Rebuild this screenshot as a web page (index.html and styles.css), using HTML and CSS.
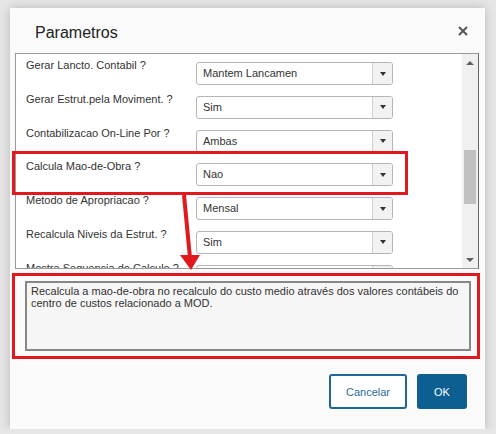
FILE: index.html
```html
<!DOCTYPE html>
<html lang="pt">

<head>
    <meta charset="UTF-8">
    <title>Parametros</title>
    <link rel="stylesheet" href="styles.css">
</head>

<body>
    <div class="dialog">
        <div class="dialog-header">
            <h2 class="dialog-title">Parametros</h2>
            <span class="close">
                <svg width="10" height="10" viewBox="0 0 10 10">
                    <path d="M1 1 L9 9 M9 1 L1 9" stroke="#555" stroke-width="2" />
                </svg>
            </span>
        </div>

        <div class="dialog-body">
            <div class="param-list">
                <div class="param-rows">
                    <div class="param-row">
                        <label class="param-label">Gerar Lancto. Contabil ?</label>
                        <div class="combo"><span class="combo-value">Mantem Lancamen</span><span class="combo-btn"></span></div>
                    </div>
                    <div class="param-row">
                        <label class="param-label">Gerar Estrut.pela Moviment. ?</label>
                        <div class="combo"><span class="combo-value">Sim</span><span class="combo-btn"></span></div>
                    </div>
                    <div class="param-row">
                        <label class="param-label">Contabilizacao On-Line Por ?</label>
                        <div class="combo"><span class="combo-value">Ambas</span><span class="combo-btn"></span></div>
                    </div>
                    <div class="param-row">
                        <label class="param-label">Calcula Mao-de-Obra ?</label>
                        <div class="combo"><span class="combo-value">Nao</span><span class="combo-btn"></span></div>
                    </div>
                    <div class="param-row">
                        <label class="param-label">Metodo de Apropriacao ?</label>
                        <div class="combo"><span class="combo-value">Mensal</span><span class="combo-btn"></span></div>
                    </div>
                    <div class="param-row">
                        <label class="param-label">Recalcula Niveis da Estrut. ?</label>
                        <div class="combo"><span class="combo-value">Sim</span><span class="combo-btn"></span></div>
                    </div>
                    <div class="param-row">
                        <label class="param-label">Mostra Sequencia do Calculo ?</label>
                        <div class="combo"><span class="combo-value">Nao</span><span class="combo-btn"></span></div>
                    </div>
                </div>
                <div class="scrollbar">
                    <div class="scroll-arrow up"></div>
                    <div class="scroll-track"><div class="scroll-thumb"></div></div>
                    <div class="scroll-arrow down"></div>
                </div>
            </div>

            <div class="help-box">
                <div class="help-text">Recalcula a mao-de-obra no recalculo do custo medio através dos valores contábeis do centro de custos relacionado a MOD.</div>
            </div>
        </div>

        <div class="dialog-footer">
            <button class="btn btn-secondary">Cancelar</button>
            <button class="btn btn-primary">OK</button>
        </div>

        <!-- annotation marks -->
        <div class="mark-row"></div>
        <svg class="mark-arrow" width="475" height="421" viewBox="0 0 475 421">
            <path d="M174 187 L180 250" stroke="#e0191f" stroke-width="4" />
            <polygon points="170,247 190,247 181,262" fill="#e0191f" />
        </svg>
    </div>
</body>

</html>
```

FILE: styles.css
```css
body {
    margin: 0;
    background-color: #e6e6e6;
    font-family: "Liberation Sans", Arial, sans-serif;
    color: #333;
}

.dialog {
    position: relative;
    width: 475px;
    height: 421px;
    margin: 8px 0 0 10px;
    background-color: #fafafa;
    box-shadow: 0 0 10px rgba(0, 0, 0, 0.2);
    display: flex;
    flex-direction: column;
}

.dialog-header {
    display: flex;
    justify-content: space-between;
    align-items: flex-start;
    padding: 16px 17px 0 25px;
    height: 29px;
}

.dialog-title {
    margin: 0;
    font-size: 16px;
    font-weight: normal;
    line-height: 18px;
    color: #222;
}

.close {
    display: block;
    margin-top: 2px;
    height: 10px;
}

.close svg {
    display: block;
}

.dialog-body {
    padding: 0 6px 0 5px;
}

.param-list {
    display: flex;
    height: 214px;
    border: 1px solid #9a9a9a;
    border-right-color: #666;
    background-color: #fff;
}

.param-rows {
    flex: 1;
    overflow: hidden;
    padding: 5px 0 0 10px;
}

.param-row {
    display: flex;
    align-items: flex-start;
    height: 33.8px;
}

.param-label {
    width: 170px;
    font-size: 11px;
    line-height: 13px;
    color: #333;
}

.combo {
    display: flex;
    margin-top: 3px;
    width: 195px;
    height: 21px;
    border: 1px solid #b5b5b5;
    border-radius: 3px;
    background-color: #fff;
    overflow: hidden;
}

.combo-value {
    flex: 1;
    padding: 4px 0 0 6px;
    font-size: 11px;
    line-height: 13px;
    color: #333;
}

.combo-btn {
    width: 19px;
    border-left: 1px solid #d0d0d0;
    background-color: #f2f2f2;
    display: flex;
    align-items: center;
    justify-content: center;
}

.combo-btn::after {
    content: "";
    border-left: 3.5px solid transparent;
    border-right: 3.5px solid transparent;
    border-top: 4px solid #333;
}

.scrollbar {
    width: 16px;
    background-color: #f0f0f0;
    display: flex;
    flex-direction: column;
}

.scroll-arrow {
    height: 17px;
    display: flex;
    align-items: center;
    justify-content: center;
}

.scroll-arrow.up::after {
    content: "";
    border-left: 4px solid transparent;
    border-right: 4px solid transparent;
    border-bottom: 4px solid #606060;
}

.scroll-arrow.down::after {
    content: "";
    border-left: 4px solid transparent;
    border-right: 4px solid transparent;
    border-top: 4px solid #606060;
}

.scroll-track {
    flex: 1;
    padding: 0 2px;
}

.scroll-thumb {
    margin-top: 79px;
    height: 54px;
    background-color: #c1c1c1;
}

.help-box {
    margin: 4px -1px 0 -3px;
    height: 75px;
    border: 3px solid #e0191f;
    padding: 5px 6px 0 10px;
}

.help-text {
    height: 62px;
    border: 2px solid #878787;
    background-color: #f6f6f6;
    padding: 2px 4px;
    font-size: 11px;
    line-height: 12px;
    color: #333;
}

.dialog-footer {
    display: flex;
    justify-content: flex-end;
    gap: 10px;
    padding: 15px 18px 0 0;
}

.btn {
    height: 35px;
    font-family: "Liberation Sans", Arial, sans-serif;
    font-size: 11px;
    border-radius: 3px;
    cursor: pointer;
}

.btn-secondary {
    width: 78px;
    background-color: #fff;
    border: 2px solid #1f6699;
    color: #2a6a9c;
}

.btn-primary {
    width: 50px;
    background-color: #0d5e91;
    border: none;
    color: #fff;
}

.mark-row {
    position: absolute;
    left: 2px;
    top: 143px;
    width: 390px;
    height: 38px;
    border: 3px solid #e0191f;
}

.mark-arrow {
    position: absolute;
    left: 0;
    top: 0;
    pointer-events: none;
}
```
